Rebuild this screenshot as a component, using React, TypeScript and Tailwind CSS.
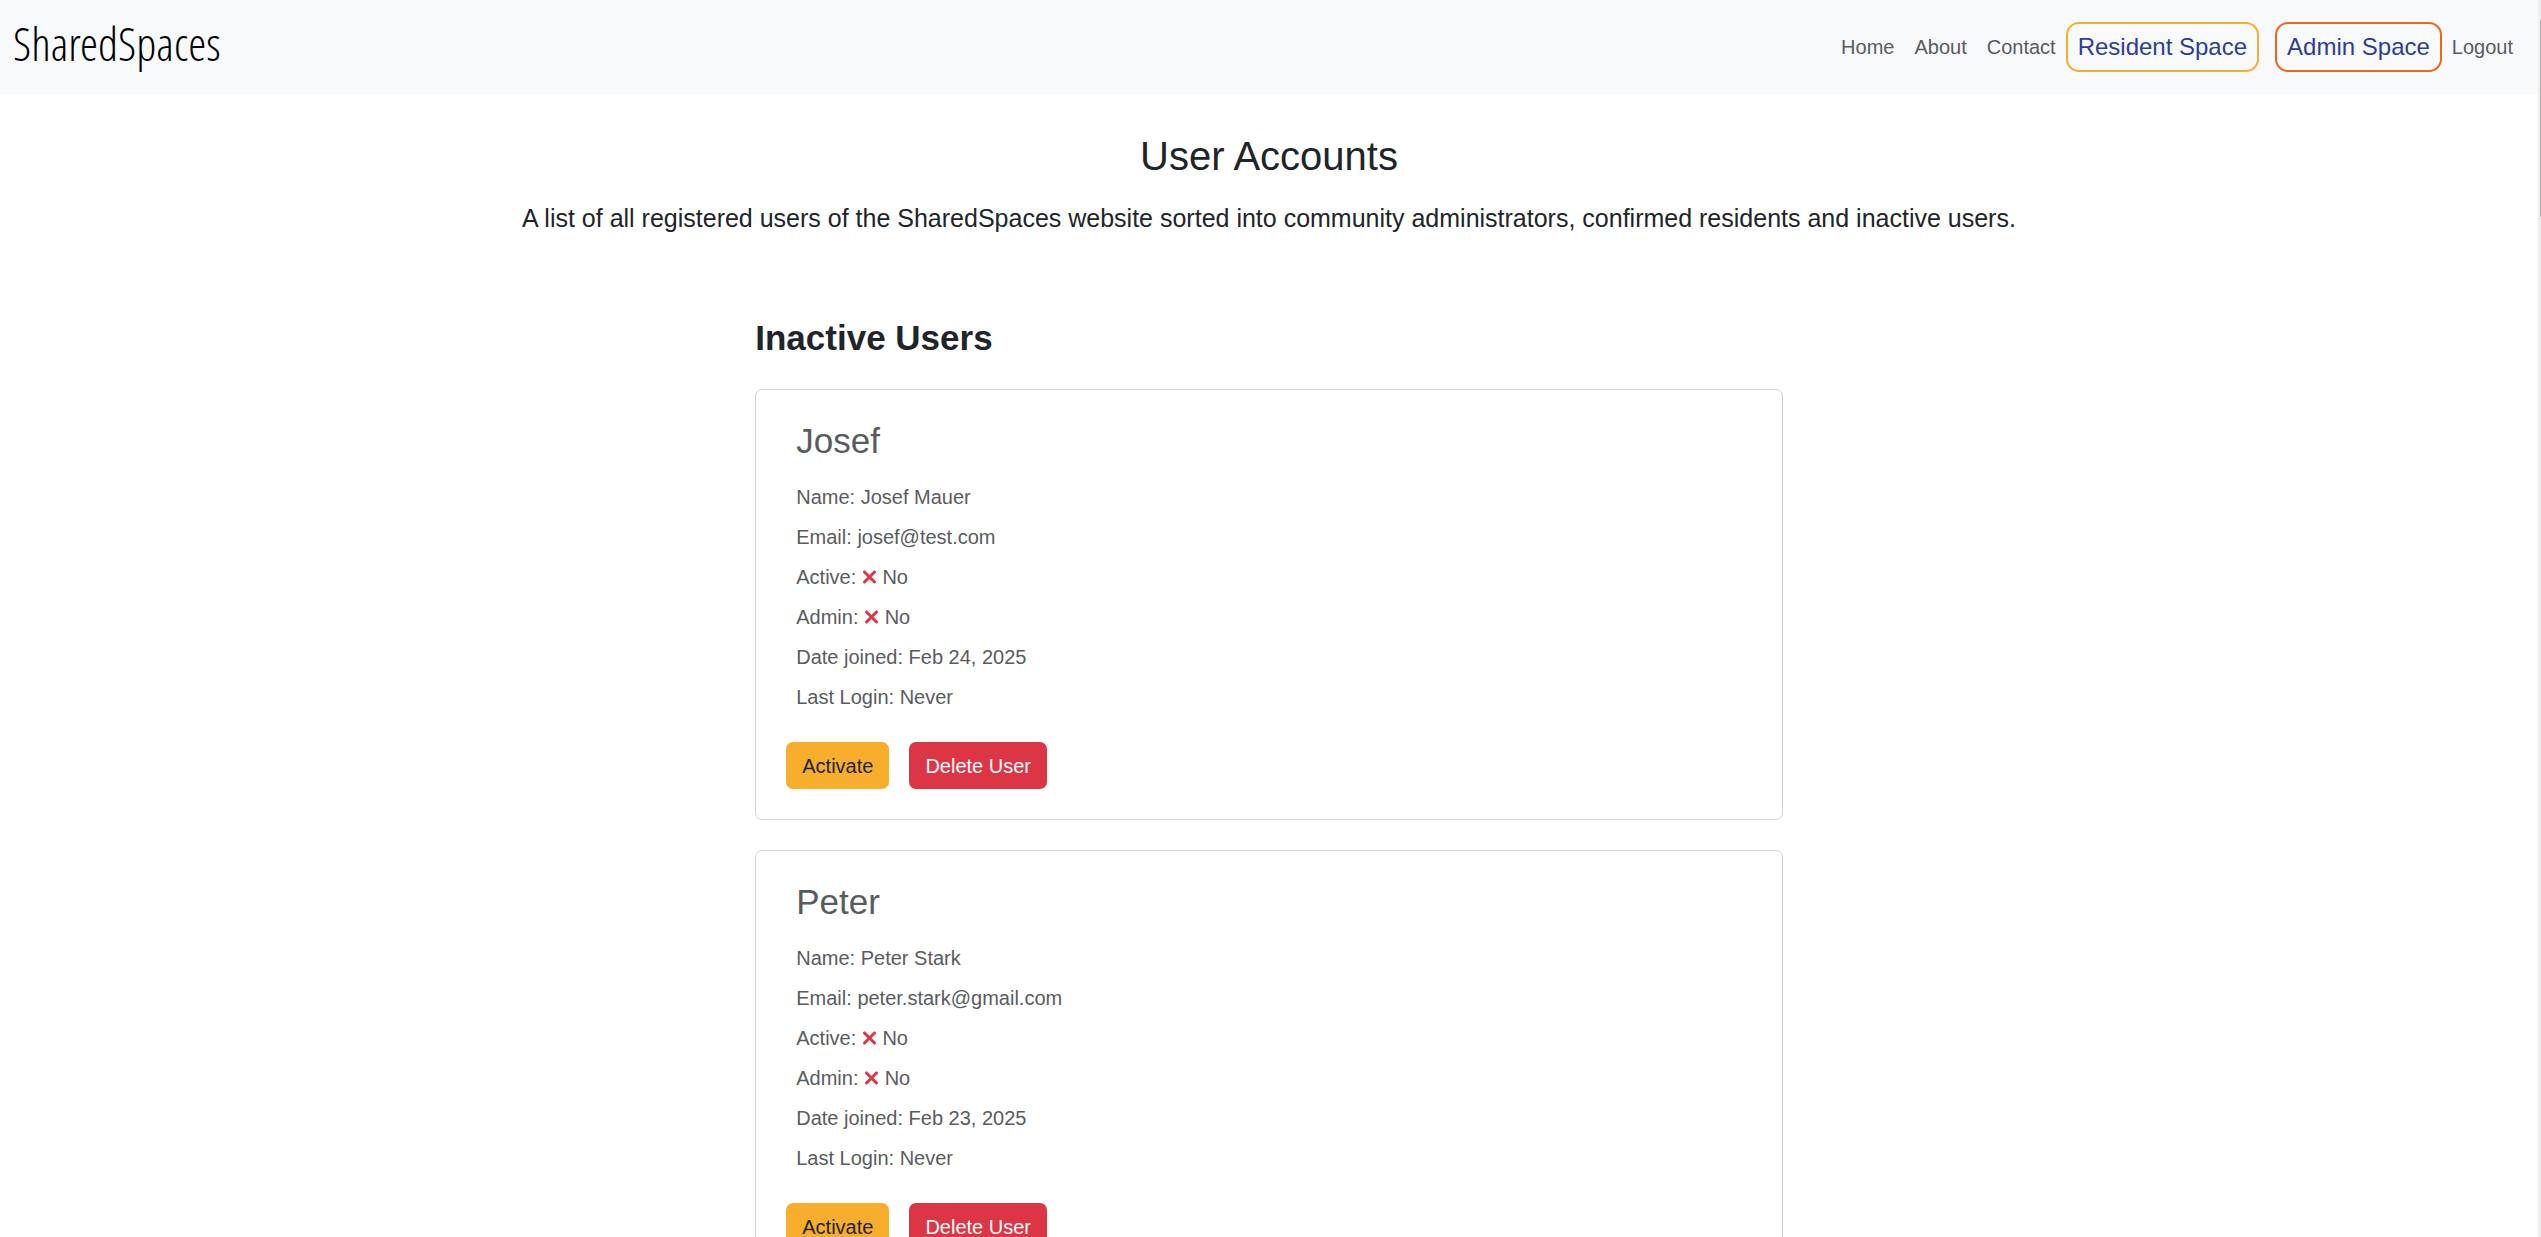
import { FaXmark } from "react-icons/fa6";

type User = {
  username: string;
  name: string;
  email: string;
  joined: string;
  lastLogin: string;
};

const users: User[] = [
  { username: "Josef", name: "Josef Mauer", email: "josef@test.com", joined: "Feb 24, 2025", lastLogin: "Never" },
  { username: "Peter", name: "Peter Stark", email: "peter.stark@gmail.com", joined: "Feb 23, 2025", lastLogin: "Never" },
];

function NavBar() {
  return (
    <nav className="flex h-[94px] items-center justify-between bg-[#f8f9fb] pr-[15px] pl-[13px]">
      <a
        href="#home"
        className="pb-2 text-[46px] leading-[60px] text-black [font-family:'Open_Sans_Condensed_Light','Open_Sans_Condensed','Open_Sans',sans-serif]"
      >
        SharedSpaces
      </a>
      <ul className="flex items-center text-[20px] leading-[30px] text-[#595c5f]">
        <li><a href="#home" className="block px-[10px]">Home</a></li>
        <li><a href="#about" className="block px-[10px]">About</a></li>
        <li><a href="#contact" className="block px-[10px]">Contact</a></li>
        <li className="mr-4">
          <a
            href="#resident"
            className="block rounded-[13px] border-2 border-[#f7ae2d] px-[10px] py-2 text-[24px] text-[#2e3d93]"
          >
            Resident Space
          </a>
        </li>
        <li>
          <a
            href="#admin"
            className="block rounded-[13px] border-2 border-[#f2641d] px-[10px] py-2 text-[24px] text-[#2e3d93]"
          >
            Admin Space
          </a>
        </li>
        <li><a href="#logout" className="block px-[10px]">Logout</a></li>
      </ul>
    </nav>
  );
}

function No() {
  return (
    <>
      <FaXmark
        className="inline h-5 w-[15px] align-[-3px] text-[#dc3545]"
        stroke="currentColor"
        strokeWidth={16}
        aria-hidden="true"
      />{" "}
      No
    </>
  );
}

function UserCard({ user }: { user: User }) {
  return (
    <article className="rounded-[7px] border border-[#d3d4d5] bg-white p-[30px] text-[20px] leading-[30px] text-[#595c5f]">
      <div className="flex flex-col gap-[10px] px-[10px]">
        <h3 className="mb-[10px] text-[35px] leading-[42px]">{user.username}</h3>
        <p>Name: {user.name}</p>
        <p>Email: {user.email}</p>
        <p>Active: <No /></p>
        <p>Admin: <No /></p>
        <p>Date joined: {user.joined}</p>
        <p>Last Login: {user.lastLogin}</p>
      </div>
      <div className="mt-[30px] flex gap-5">
        <button type="button" className="h-[47px] rounded-[7px] bg-[#f7ae2d] px-4 pt-px text-[#212529]">
          Activate
        </button>
        <button type="button" className="h-[47px] rounded-[7px] bg-[#dc3545] px-4 pt-px text-white">
          Delete User
        </button>
      </div>
    </article>
  );
}

export default function App() {
  return (
    <div className="flex h-screen bg-white text-[#212529] [font-family:'Liberation_Sans',Arial,sans-serif]">
      <div className="min-w-0 flex-1 overflow-y-auto [scrollbar-width:none]">
        <NavBar />
        <main>
          <header className="px-[15px] pt-[38px] text-center">
            <h1 className="text-[40px] leading-[48px]">User Accounts</h1>
            <p className="mt-5 text-[25px] leading-[37px]">
              A list of all registered users of the SharedSpaces website sorted into community administrators,
              confirmed residents and inactive users.
            </p>
          </header>
          <section className="mx-auto mt-20 w-5/12 px-[15px]">
            <h2 className="text-[35px] leading-[42px] font-bold">Inactive Users</h2>
            <div className="mt-[30px] flex flex-col gap-[30px] pb-[30px]">
              {users.map((user) => (
                <UserCard key={user.username} user={user} />
              ))}
            </div>
          </section>
        </main>
      </div>
      <div className="flex w-[3px] justify-end bg-[#eeeeee] pt-5" aria-hidden="true">
        <div className="h-[197px] w-px bg-[#b5b5b5]" />
      </div>
    </div>
  );
}
